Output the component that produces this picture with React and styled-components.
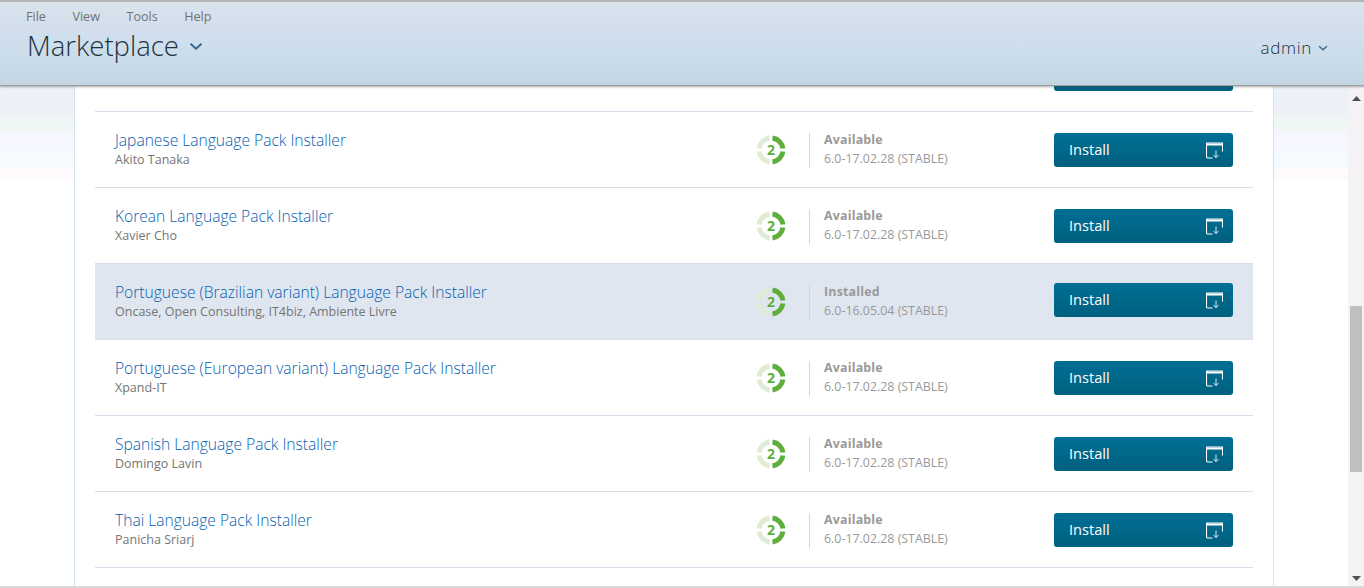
import React from "react";
import styled, { createGlobalStyle } from "styled-components";

const PACKS = [
    { title: "Japanese Language Pack Installer", author: "Akito Tanaka", status: "Available", version: "6.0-17.02.28 (STABLE)" },
    { title: "Korean Language Pack Installer", author: "Xavier Cho", status: "Available", version: "6.0-17.02.28 (STABLE)" },
    {
        title: "Portuguese (Brazilian variant) Language Pack Installer",
        author: "Oncase, Open Consulting, IT4biz, Ambiente Livre",
        status: "Installed",
        version: "6.0-16.05.04 (STABLE)",
        selected: true
    },
    { title: "Portuguese (European variant) Language Pack Installer", author: "Xpand-IT", status: "Available", version: "6.0-17.02.28 (STABLE)" },
    { title: "Spanish Language Pack Installer", author: "Domingo Lavin", status: "Available", version: "6.0-17.02.28 (STABLE)" },
    { title: "Thai Language Pack Installer", author: "Panicha Sriarj", status: "Available", version: "6.0-17.02.28 (STABLE)" }
];

const GlobalStyle = createGlobalStyle`
    html, body {
        margin: 0;
        padding: 0;
        height: 100%;
        overflow: hidden;
        background: #fff;
        font-family: "Open Sans", "Liberation Sans", sans-serif;
    }
    #root {
        height: 100%;
    }
`;

const Page = styled.div`
    width: 1364px;
    height: 588px;
    display: flex;
    flex-direction: column;
    overflow: hidden;
    border-bottom: 2px solid #d9d9d9;
    box-sizing: border-box;
`;
const Header = styled.header`
    position: relative;
    z-index: 1;
    flex: none;
    height: 86px;
    box-sizing: border-box;
    border-top: 2px solid #b5b5b5;
    border-bottom: 1px solid #9a9ca0;
    box-shadow: 0 1px 2px rgba(80, 80, 80, 0.45);
    background: linear-gradient(#d8e3ec 0, #d4dfee 30%, #ccdeec 55%, #cbdcea 70%, #c4d5e4 100%);
    padding: 7px 26px 0;
    display: flex;
    flex-direction: column;
`;
const MenuBar = styled.nav`
    display: flex;
    gap: 26.5px;
    height: 16px;
    font-size: 12.6px;
    line-height: 16px;
    color: #6f7374;
`;
const TitleBar = styled.div`
    display: flex;
    justify-content: space-between;
    align-items: center;
    margin-top: 2px;
    padding-right: 10px;
`;
const PageTitle = styled.div`
    display: flex;
    align-items: center;
    gap: 10px;
    margin-left: 1px;
    font-size: 27.5px;
    line-height: 38px;
    font-weight: 300;
    color: #22323f;
`;
const UserMenu = styled.div`
    display: flex;
    align-items: center;
    gap: 6px;
    margin-top: 3px;
    font-size: 17px;
    line-height: 24px;
    font-weight: 300;
    letter-spacing: 0.7px;
    color: #22323f;
`;
const Body = styled.div`
    flex: 1;
    min-height: 0;
    display: flex;
    background: linear-gradient(
        #ebf1f7 0,
        #eef2f7 32px,
        #eff7f5 32px,
        #eff7f5 44px,
        #f6f6fe 44px,
        #f6f6fe 64px,
        #f5faff 64px,
        #f5faff 82px,
        #fef9fd 82px,
        #fef9fd 94px,
        #fff 94px
    );
`;
const Main = styled.main`
    flex: 1;
    min-width: 0;
    display: flex;
    justify-content: center;
`;
const Panel = styled.section`
    width: 1200px;
    box-sizing: border-box;
    background: #fff;
    border-left: 1px solid #d3e2f0;
    border-right: 1px solid #d3e2f0;
    padding: 0 20px;
    overflow: hidden;
`;
const ClippedRow = styled.div`
    height: 5px;
    display: flex;
    justify-content: flex-end;
    align-items: flex-end;
    border-bottom: 1px solid #d5dfe9;
    padding: 0 20px 20px 0;
`;
const ClippedButton = styled.div`
    width: 179px;
    height: 5px;
    background: #00607f;
    border-radius: 0 0 3px 3px;
`;
const Row = styled.article`
    height: 76px;
    box-sizing: border-box;
    display: flex;
    align-items: flex-start;
    padding: 0 20px 0 20px;
    border-bottom: 1px solid #d5dfe9;
    background: ${props => (props.$selected ? "#dfe6ef" : "#fff")};
`;
const Info = styled.div`
    flex: 1;
    min-width: 0;
    padding-top: 17px;
`;
const PackTitle = styled.a`
    display: block;
    font-size: 15.6px;
    line-height: 22px;
    font-weight: 300;
    color: #0560b0;
`;
const Author = styled.div`
    font-size: 12.5px;
    line-height: 16px;
    margin-top: 1px;
    color: #757575;
`;
const Badge = styled.svg`
    flex: none;
    width: 30px;
    height: 30px;
    margin-top: 23px;
    margin-right: 23px;
`;
const Status = styled.div`
    flex: none;
    width: 245px;
    height: 35px;
    box-sizing: border-box;
    margin-top: 21px;
    padding-left: 14px;
    border-left: 1px solid #ccd9e6;
    font-size: 12.4px;
    line-height: 19px;
    color: #999;
`;
const StatusLabel = styled.div`
    font-weight: 700;
    margin-top: -3px;
    letter-spacing: 0.2px;
`;
const InstallButton = styled.button`
    flex: none;
    width: 179px;
    height: 34px;
    margin-top: ${props => (props.$selected ? "19px" : "21px")};
    padding: 0 10px 2px 15px;
    display: flex;
    align-items: center;
    justify-content: space-between;
    border: 0;
    border-radius: 3px;
    background: linear-gradient(#006f95, #00607f);
    color: #fff;
    font-family: inherit;
    font-size: 14.6px;
    font-weight: 400;
`;
const InstallGlyph = styled.svg`
    margin-top: 2px;
`;
const Scrollbar = styled.aside`
    flex: none;
    width: 16px;
    display: flex;
    flex-direction: column;
    align-items: center;
    background: #f5f2f6;
`;
const ScrollArrow = styled.div`
    flex: none;
    height: 16px;
    margin-top: ${props => props.$offset}px;
    display: flex;
    align-items: center;
    justify-content: center;
`;
const ScrollThumb = styled.div`
    width: 12px;
    height: 166px;
    margin-top: 200px;
    margin-bottom: auto;
    background: #bfbec1;
`;

function Chevron({ size }) {
    return (
        <svg width={size} height={size * 0.6} viewBox="0 0 14 8" fill="none">
            <path d="M1.5 1.5 7 6.500l5.500-5" stroke="#3d6a8e" strokeWidth="2" />
        </svg>
    );
}

function ScoreBadge() {
    return (
        <Badge viewBox="0 0 30 30">
            <g fill="none" strokeWidth="5">
                <path d="M13.500 3.100A12 12 0 0 0 3.100 13.500" stroke="#e0ebd6" />
                <path d="M3.100 16.500A12 12 0 0 0 13.500 26.900" stroke="#e0ebd6" />
                <path d="M16.500 3.100A12 12 0 0 1 26.900 13.500" stroke="#5fae3b" />
                <path d="M26.900 16.500A12 12 0 0 1 16.500 26.900" stroke="#5fae3b" />
            </g>
            <text x="15" y="20" textAnchor="middle" fontSize="14" fontWeight="700" fill="#5fae3b" fontFamily="Open Sans, sans-serif">
                2
            </text>
        </Badge>
    );
}

function InstallIcon() {
    return (
        <InstallGlyph width="17" height="17" viewBox="0 0 17 17" fill="none">
            <path d="M.5 16V1h16v8.500M1 16h5.500" stroke="#fff" strokeWidth="1.100" />
            <path d="M.5 2.500h16" stroke="#fff" strokeWidth="2" />
            <path d="M10 8.500v7M7.500 13l2.500 2.700 2.500-2.700" stroke="#dcebf1" strokeWidth="1" />
        </InstallGlyph>
    );
}

function PackRow({ pack }) {
    return (
        <Row $selected={pack.selected}>
            <Info>
                <PackTitle>{pack.title}</PackTitle>
                <Author>{pack.author}</Author>
            </Info>
            <ScoreBadge />
            <Status>
                <StatusLabel>{pack.status}</StatusLabel>
                <div>{pack.version}</div>
            </Status>
            <InstallButton $selected={pack.selected}>
                Install
                <InstallIcon />
            </InstallButton>
        </Row>
    );
}

export default function App() {
    return (
        <Page>
            <GlobalStyle />
            <Header>
                <MenuBar>
                    <span>File</span>
                    <span>View</span>
                    <span>Tools</span>
                    <span>Help</span>
                </MenuBar>
                <TitleBar>
                    <PageTitle>
                        Marketplace
                        <Chevron size={14} />
                    </PageTitle>
                    <UserMenu>
                        admin
                        <Chevron size={10} />
                    </UserMenu>
                </TitleBar>
            </Header>
            <Body>
                <Main>
                    <Panel>
                        <ClippedRow>
                            <ClippedButton />
                        </ClippedRow>
                        {PACKS.map(pack => (
                            <PackRow key={pack.title} pack={pack} />
                        ))}
                    </Panel>
                </Main>
                <Scrollbar>
                    <ScrollArrow $offset={4}>
                        <svg width="9" height="5" viewBox="0 0 9 5">
                            <path d="M4.500 0 9 5H0z" fill="#505050" />
                        </svg>
                    </ScrollArrow>
                    <ScrollThumb />
                    <ScrollArrow $offset={0}>
                        <svg width="9" height="5" viewBox="0 0 9 5">
                            <path d="M0 0h9L4.500 5z" fill="#505050" />
                        </svg>
                    </ScrollArrow>
                </Scrollbar>
            </Body>
        </Page>
    );
}
